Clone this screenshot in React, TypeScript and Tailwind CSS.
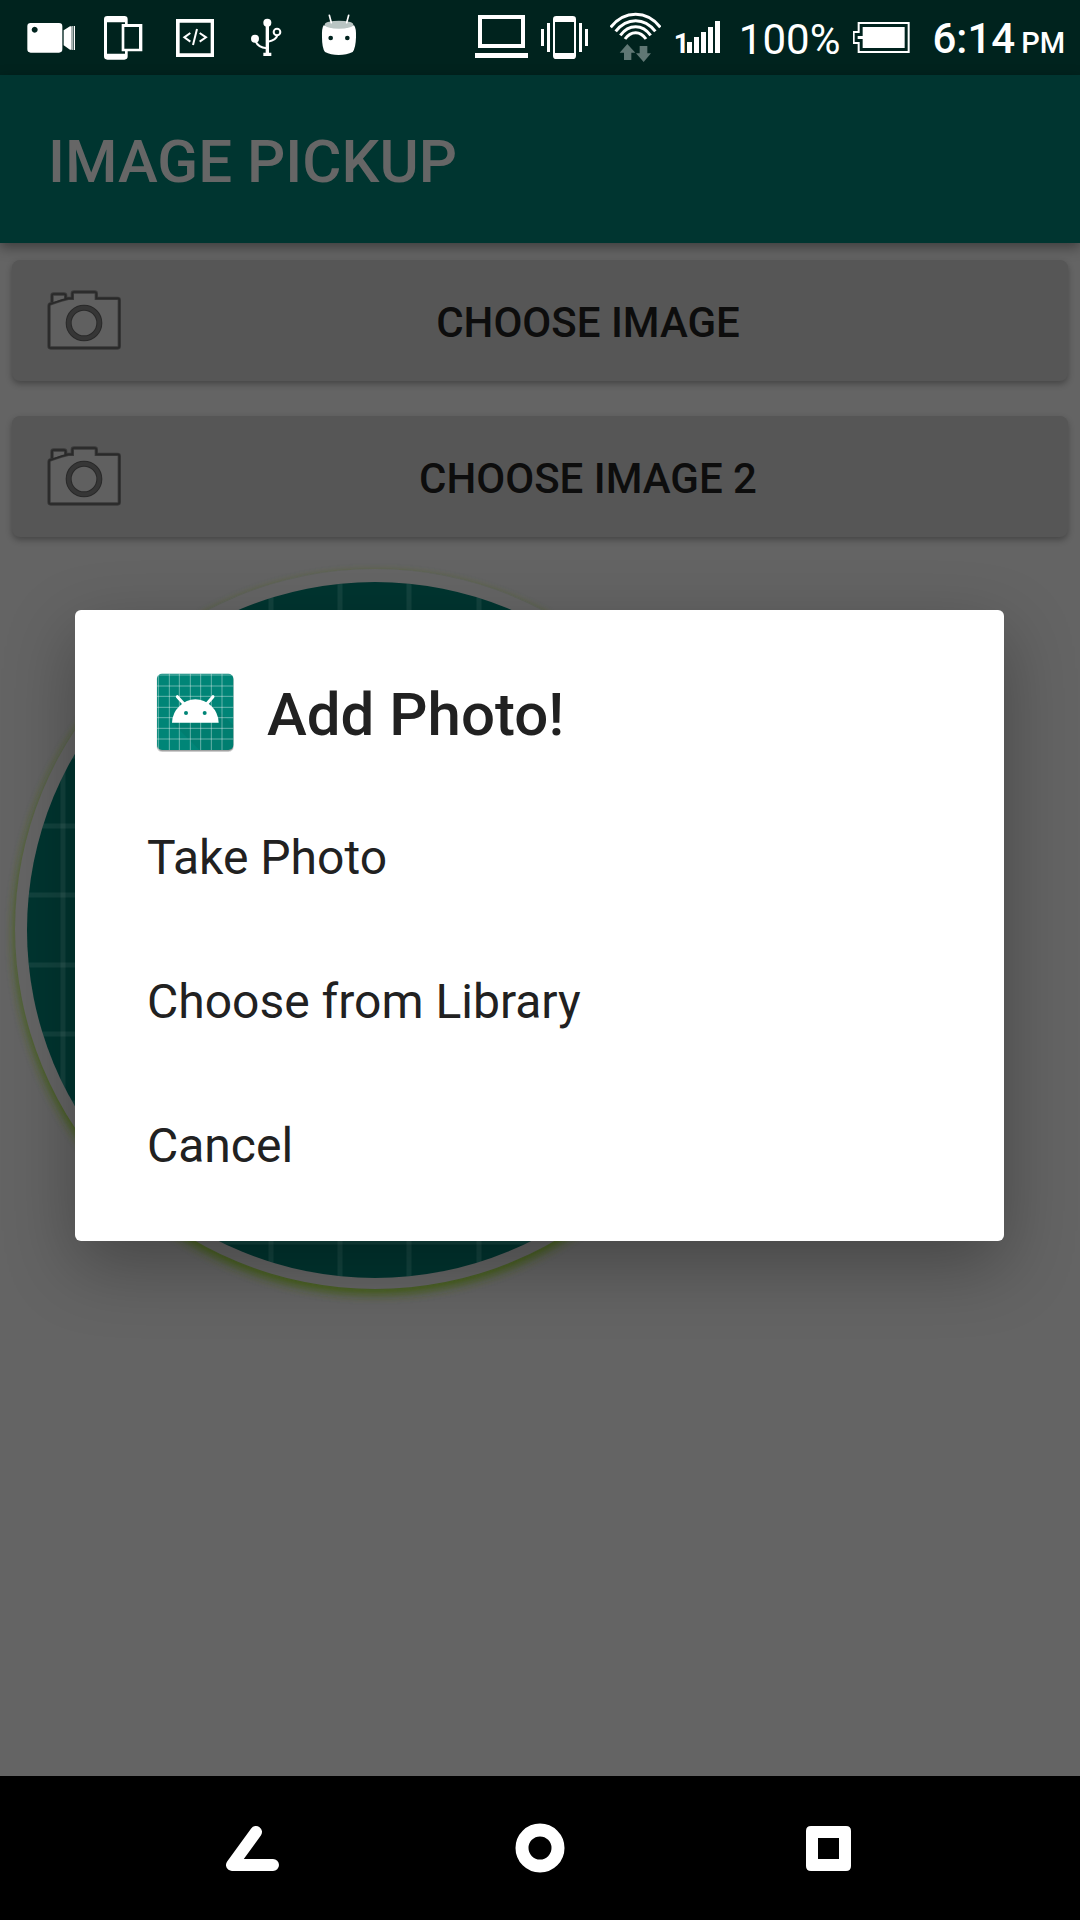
import React from "react";

const statusLeft = [
  {
    name: "Screen recording",
    box: "45 0 216 225",
    art: (
      <>
        <path
          fillRule="evenodd"
          d="M92 69H177Q187 69 187 79V148Q187 158 177 158H92Q82 158 82 148V79Q82 69 92 69ZM104 80a9 9 0 1 0 .1 0Z"
        />
        <path d="M191 91 210 79H215V149H210L191 136ZM217 78H220V150H217ZM222 78H225V150H222Z" />
      </>
    ),
  },
  {
    name: "Device connected",
    box: "261 0 216 225",
    art: (
      <path
        fillRule="evenodd"
        d="M322 48H373Q383 48 383 58V72H427V154H383V169Q383 179 373 179H322Q312 179 312 169V58Q312 48 322 48ZM321 67V161H375V154H365V72H375V67ZM373 81V146H417V81Z"
      />
    ),
  },
  {
    name: "Developer mode",
    box: "477 0 216 225",
    art: (
      <>
        <path fillRule="evenodd" d="M528 57H642V171H528ZM539 68V160H632V68Z" />
        <path
          fill="none"
          stroke="currentColor"
          strokeWidth="6"
          d="M571 99 553 112 571 125M599 99 618 112 599 125M591 87 579 135"
        />
      </>
    ),
  },
  {
    name: "USB connected",
    box: "693 0 216 225",
    art: (
      <>
        <circle cx="802" cy="68" r="12" />
        <circle cx="765" cy="116" r="12" />
        <path d="M797 68H807V158H814V168H790V158H797Z" />
        <g fill="none" stroke="currentColor" strokeWidth="6">
          <circle cx="831" cy="96" r="10" />
          <path d="M767 124Q774 142 800 145M832 106Q829 120 804 125" />
        </g>
      </>
    ),
  },
  {
    name: "Android system",
    box: "909 0 216 225",
    art: (
      <>
        <path d="M971 76Q1016 88 1062 76Q1069 84 1068 112Q1067 145 1058 156Q1040 165 1016 165Q992 165 975 156Q966 145 966 112Q965 84 971 76Z" />
        <ellipse cx="1017" cy="74" rx="43" ry="12" fill="#b9c5c3" />
        <path fill="none" stroke="currentColor" strokeWidth="5" strokeLinecap="round" d="M988 46 994 68M1046 46 1040 68" />
        <g fill="#00231e">
          <circle cx="992" cy="114" r="7" />
          <circle cx="1042" cy="114" r="7" />
        </g>
      </>
    ),
  },
];

function StatusBar() {
  return (
    <header className="flex h-[75px] items-center justify-between bg-[#00231e] pr-[15px] pl-[15px] text-white">
      <div className="flex">
        {statusLeft.map((icon) => (
          <svg key={icon.name} viewBox={icon.box} className="h-[75px] w-[72px]" fill="currentColor" role="img" aria-label={icon.name}>
            {icon.art}
          </svg>
        ))}
      </div>
      <div className="flex items-center">
        <svg viewBox="69 0 159 225" className="mr-[13px] h-[75px] w-[53px]" fill="currentColor" aria-hidden="true">
          <path fillRule="evenodd" d="M78 45H219V144H78ZM90 57V132H207V57Z" />
          <path d="M69 159H228V174H69Z" />
        </svg>
        <svg viewBox="267 0 141 225" className="mr-[22px] h-[75px] w-[47px]" fill="currentColor" aria-hidden="true">
          <path
            fillRule="evenodd"
            d="M313 48H362Q372 48 372 58V167Q372 177 362 177H313Q303 177 303 167V58Q303 48 313 48ZM309 66V159H366V66Z"
          />
          <path d="M267 87H276V138H267ZM285 69H294V156H285ZM381 69H390V156H381ZM399 87H408V138H399Z" />
        </svg>
        <svg viewBox="474 0 153 225" className="mr-[15px] h-[75px] w-[51px]" aria-hidden="true">
          <g fill="none" stroke="currentColor" strokeWidth="9">
            <path d="M476 82Q507 43 551 43Q594 43 625 82" />
            <path d="M491 94Q516 62 551 62Q585 62 610 94" />
            <path d="M505 106Q524 80 551 80Q577 80 596 106" />
            <path d="M519 117Q532 98 551 98Q569 98 582 117" />
          </g>
          <path fill="#5f7774" d="M503 158 526 132 550 158H538V180H516V158ZM552 160H563V138H586V160H597L575 186Z" />
        </svg>
        <svg viewBox="672 0 132 225" className="mr-[19px] h-[75px] w-[44px] overflow-visible" fill="currentColor" aria-hidden="true">
          <text x="665" y="159" fontSize="82" fontWeight="700" className="font-[Roboto,sans-serif]">
            1
          </text>
          <path d="M705 126H720V159H705ZM726 111H741V159H726ZM747 96H762V159H747ZM768 81H783V159H768ZM789 63H804V159H789Z" />
        </svg>
        <span className="mr-[13px] pt-1 text-[42px] leading-[50px]">100%</span>
        <svg viewBox="397 0 171 225" className="mr-[22px] h-[75px] w-[57px]" fill="none" aria-hidden="true">
          <path stroke="currentColor" strokeWidth="6" d="M414 69H564V156H414V129H399V96H414Z" />
          <path fill="currentColor" d="M426 81H552V144H426V117H411V108H426Z" />
        </svg>
        <span className="flex items-baseline gap-[6px] pt-1 font-medium">
          <span className="text-[42px] leading-[50px]">6:14</span>
          <span className="text-[29px]">PM</span>
        </span>
      </div>
    </header>
  );
}

function CameraIcon() {
  const body =
    "M153 249Q147 250 147 256V377Q147 382 152 382H353Q358 382 358 377V238Q358 233 353 233H289V219Q289 214 284 214H222Q217 214 217 219V233H205Q190 236 153 249Z";
  const flash = "M156 245V225Q156 220 161 220H192Q197 220 197 225V234";
  return (
    <svg viewBox="108 157 288 288" className="size-[96px] shrink-0" aria-hidden="true">
      <path d={body} fill="#606060" stroke="#3a3a3a" strokeWidth="10" />
      <path d={flash} fill="#606060" stroke="#3a3a3a" strokeWidth="10" />
      <path d={body} fill="none" stroke="#292929" strokeWidth="5" />
      <path d={flash} fill="none" stroke="#292929" strokeWidth="5" />
      <circle cx="252" cy="307" r="46" fill="none" stroke="#292929" strokeWidth="18" />
      <circle cx="252" cy="307" r="46" fill="none" stroke="#363636" strokeWidth="12" />
    </svg>
  );
}

function PickButton({ label }: { label: string }) {
  return (
    <button
      type="button"
      className="flex h-[121px] w-full items-center rounded-[8px] bg-[#565656] px-6 text-[42px] leading-[50px] font-medium text-[#0d0d0d] shadow-[0_3px_6px_rgba(0,0,0,0.3)]"
    >
      <CameraIcon />
      <span className="flex-1 pt-1 text-center">{label}</span>
    </button>
  );
}

function PreviewImage() {
  const vertical = [63, 133, 202, 271, 340, 409, 479, 548, 617, 687];
  const horizontal = [617, 687, 756, 826, 895, 965, 1034, 1103, 1172, 1242];
  return (
    <svg viewBox="0 555 750 750" className="mt-[18px] w-[750px] max-w-full" role="img" aria-label="Selected image">
      <defs>
        <clipPath id="disc">
          <circle cx="375" cy="930" r="348" />
        </clipPath>
        <filter id="soft" x="-10%" y="-10%" width="120%" height="120%">
          <feGaussianBlur stdDeviation="5" />
        </filter>
      </defs>
      <circle cx="375" cy="934" r="361" fill="#47611f" filter="url(#soft)" />
      <circle cx="375" cy="929" r="360" fill="#656565" />
      <circle cx="375" cy="930" r="348" fill="#003530" />
      <g clipPath="url(#disc)" stroke="#ffffff" strokeOpacity="0.07" strokeWidth="5">
        {vertical.map((x) => (
          <path key={x} d={`M${x} 570V1290`} />
        ))}
        {horizontal.map((y) => (
          <path key={y} d={`M15 ${y}H735`} />
        ))}
      </g>
    </svg>
  );
}

function LauncherIcon() {
  return (
    <svg viewBox="21 12 288 288" className="size-[96px] shrink-0" aria-hidden="true">
      <rect x="50" y="42" width="231" height="234" rx="16" fill="#000000" fillOpacity="0.15" />
      <rect x="51" y="45" width="229" height="229" rx="15" fill="#000000" fillOpacity="0.25" />
      <rect x="51" y="41" width="229" height="229" rx="15" fill="#008577" />
      <path d="M96 188H236L217 135 280 195V270H178Z" fill="#000000" fillOpacity="0.05" />
      <path
        stroke="#ffffff"
        strokeOpacity="0.4"
        strokeWidth="3"
        d="M55 41V270M88 41V270M118 41V270M151 41V270M182 41V270M214 41V270M246 41V270M51 45H280M51 78H280M51 109H280M51 142H280M51 173H280M51 205H280M51 237H280"
      />
      <path d="M96 188Q97 158 119 138Q139 118 166 118Q193 118 214 138Q235 158 236 188Z" fill="#ffffff" />
      <path d="M112 110 132 132M219 110 200 132" stroke="#ffffff" strokeWidth="9" strokeLinecap="round" />
      <circle cx="138" cy="159" r="6" fill="#008577" />
      <circle cx="194" cy="159" r="6" fill="#008577" />
    </svg>
  );
}

function PhotoDialog() {
  const options = ["Take Photo", "Choose from Library", "Cancel"];
  return (
    <div className="absolute inset-0 flex items-center pr-[76px] pl-[75px]">
      <section
        role="dialog"
        aria-labelledby="dialog-title"
        className="w-full rounded-[6px] bg-white pb-6 text-[#212121] shadow-[0_24px_70px_rgba(0,0,0,0.3)]"
      >
        <div className="flex items-center gap-6 px-[72px] pt-[54px] pb-[25px]">
          <LauncherIcon />
          <h2 id="dialog-title" className="pt-1.5 text-[60px] leading-[72px] font-medium">
            Add Photo!
          </h2>
        </div>
        <ul>
          {options.map((option) => (
            <li key={option}>
              <button type="button" className="h-[144px] w-full px-[72px] pt-0.5 text-left text-[48px] leading-[56px]">
                {option}
              </button>
            </li>
          ))}
        </ul>
      </section>
    </div>
  );
}

function NavigationBar() {
  const items = [
    {
      name: "Back",
      box: "222 1818 60 60",
      art: <path d="M256 1832 232 1865H273" strokeWidth="12" strokeLinecap="round" strokeLinejoin="round" />,
    },
    { name: "Home", box: "510 1818 60 60", art: <circle cx="540" cy="1848" r="18" strokeWidth="13" /> },
    {
      name: "Recent apps",
      box: "798 1818 60 60",
      art: <path fill="currentColor" stroke="none" fillRule="evenodd" d="M811 1826H846Q851 1826 851 1831V1866Q851 1871 846 1871H811Q806 1871 806 1866V1831Q806 1826 811 1826ZM818 1838V1859H839V1838Z" />,
    },
  ];
  return (
    <nav className="flex h-[144px] bg-black px-[10%] text-white">
      {items.map((item) => (
        <button key={item.name} type="button" aria-label={item.name} className="flex flex-1 items-center justify-center">
          <svg viewBox={item.box} className="size-[60px]" fill="none" stroke="currentColor" aria-hidden="true">
            {item.art}
          </svg>
        </button>
      ))}
    </nav>
  );
}

export default function App() {
  return (
    <div className="flex min-h-screen flex-col bg-[#646464] font-[Roboto,sans-serif]">
      <StatusBar />
      <div className="relative flex flex-1 flex-col">
        <div className="flex h-[168px] items-center bg-[#003530] px-12 pt-1.5 shadow-[0_4px_12px_rgba(0,0,0,0.4)]">
          <h1 className="text-[60px] leading-[72px] font-medium text-[#666666]">IMAGE PICKUP</h1>
        </div>
        <main>
          <div className="flex flex-col gap-[35px] px-3 pt-[17px]">
            <PickButton label="CHOOSE IMAGE" />
            <PickButton label="CHOOSE IMAGE 2" />
          </div>
          <PreviewImage />
        </main>
        <PhotoDialog />
      </div>
      <NavigationBar />
    </div>
  );
}
